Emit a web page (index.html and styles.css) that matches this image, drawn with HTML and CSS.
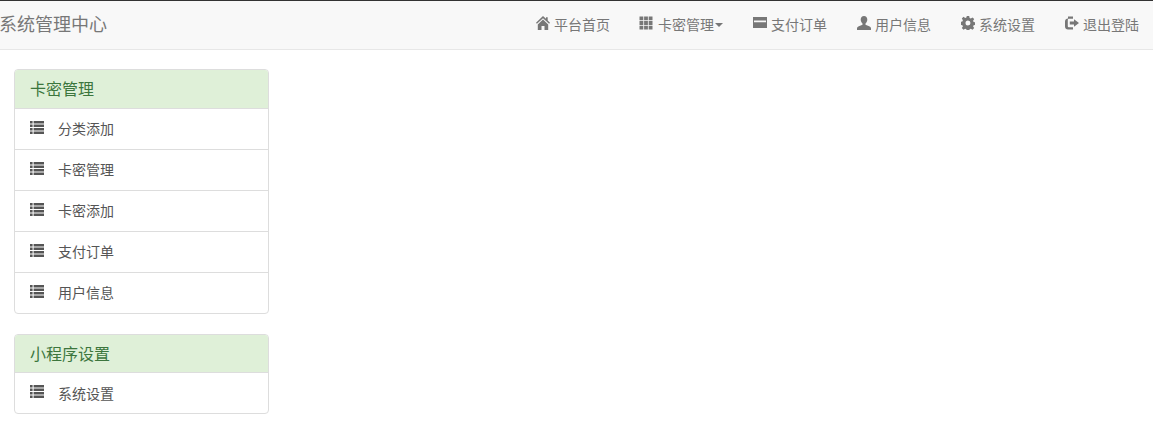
FILE: index.html
```html
<!DOCTYPE html>
<html>
<head>
  <meta charset="utf-8">
  <title>系统管理中心</title>
  <link rel="stylesheet" href="styles.css">
</head>
<body>
  <svg class="defs" width="0" height="0">
    <symbol id="i-list" viewBox="0 0 14 13">
      <path d="M0 0h2.600v2.600H0zM3.600 0H14v2.600H3.600zM0 3.500h2.600v2.600H0zM3.600 3.500H14v2.600H3.600zM0 7h2.600v2.600H0zM3.600 7H14v2.600H3.600zM0 10.400h2.600V13H0zM3.600 10.400H14V13H3.600z"/>
    </symbol>
  </svg>

  <nav class="navbar">
    <a class="brand" href="#">系统管理中心</a>
    <ul class="nav">
      <li><a class="nav-first" href="#"><svg class="icon" viewBox="0 0 14 14"><path d="M7 0 0 6.700l.9 1L7 2.200l6.100 5.500.9-1-2.300-2.100V1.200H10v1.500zM1.800 8.400V14h3.700v-4h3v4h3.700V8.400L7 3.600z"/></svg>平台首页</a></li>
      <li><a href="#"><svg class="icon icon-wide" viewBox="0 0 14 14"><path d="M.5.500h3.800v3.800H.5zM5.100.500h3.800v3.800H5.100zM9.700.500h3.800v3.800H9.700zM.5 5.100h3.800v3.800H.5zM5.100 5.100h3.800v3.800H5.100zM9.700 5.100h3.800v3.800H9.700zM.5 9.700h3.800v3.800H.5zM5.100 9.700h3.800v3.800H5.100zM9.700 9.700h3.800v3.800H9.700z"/></svg>卡密管理<span class="caret"></span></a></li>
      <li><a href="#"><svg class="icon" viewBox="0 0 14 14"><path fill-rule="evenodd" d="M0 1h14v11H0zM1 4.500v1.800h12V4.500z"/></svg>支付订单</a></li>
      <li><a href="#"><svg class="icon" viewBox="0 0 14 14"><path d="M7 0c2.100 0 3.300 1.600 3.300 3.600 0 1.700-.8 3.100-1.800 3.900v1.300l3.700 1.400c1.200.5 1.800 1.200 1.800 2.200V14H0v-1.600c0-1 .6-1.700 1.800-2.200l3.700-1.400V7.500c-1-.8-1.800-2.200-1.800-3.900C3.700 1.600 4.900 0 7 0z"/></svg>用户信息</a></li>
      <li><a href="#"><svg class="icon" viewBox="0 0 14 14"><path fill-rule="evenodd" d="M5.800 0h2.400l.4 2 1.200.5 1.700-1.100 1.700 1.700-1.100 1.700.5 1.200 2 .4v2.400l-2 .4-.5 1.200 1.100 1.700-1.700 1.700-1.700-1.100-1.200.5-.4 2H5.800l-.4-2-1.200-.5-1.700 1.100-1.700-1.700 1.100-1.700-.5-1.200-2-.4V5.800l2-.4.5-1.200-1.100-1.700 1.700-1.700 1.700 1.100 1.200-.5zM7 4.500a2.500 2.500 0 1 0 0 5 2.500 2.500 0 0 0 0-5z"/></svg>系统设置</a></li>
      <li><a href="#"><svg class="icon" viewBox="0 0 14 14"><path d="M3 .5h5v2.300H3.700c-.5 0-.9.400-.9.900v6.600c0 .5.400.9.900.9H8v2.300H3c-1.700 0-3-1.300-3-3v-5c0-1.700 1.300-3 3-3zM9 3.300 14 7l-5 3.700V8.500H4.800v-3H9z"/></svg>退出登陆</a></li>
    </ul>
  </nav>

  <div class="sidebar">
    <div class="panel">
      <div class="panel-heading">卡密管理</div>
      <ul class="list-group">
        <li><svg class="icon-list"><use href="#i-list"/></svg><span class="label">分类添加</span></li>
        <li><svg class="icon-list"><use href="#i-list"/></svg><span class="label">卡密管理</span></li>
        <li><svg class="icon-list"><use href="#i-list"/></svg><span class="label">卡密添加</span></li>
        <li><svg class="icon-list"><use href="#i-list"/></svg><span class="label">支付订单</span></li>
        <li><svg class="icon-list"><use href="#i-list"/></svg><span class="label">用户信息</span></li>
      </ul>
    </div>
    <div class="panel">
      <div class="panel-heading">小程序设置</div>
      <ul class="list-group">
        <li><svg class="icon-list"><use href="#i-list"/></svg><span class="label">系统设置</span></li>
      </ul>
    </div>
  </div>
</body>
</html>
```

FILE: styles.css
```css
body {
  margin: 0;
  font-family: "Liberation Sans", "Noto Sans CJK SC", sans-serif;
  font-size: 14px;
  color: #333;
  background: #fff;
}
a {
  text-decoration: none;
}
ul {
  list-style: none;
  margin: 0;
  padding: 0;
}
.defs {
  position: absolute;
}
.navbar {
  display: flex;
  justify-content: space-between;
  height: 48px;
  border-top: 1px solid #333;
  border-bottom: 1px solid #e7e7e7;
  background: #f8f8f8;
}
.brand {
  margin-left: -1px;
  font-size: 18px;
  line-height: 48px;
  color: #777;
}
.nav {
  display: flex;
  margin-right: -1px;
}
.nav a {
  display: flex;
  align-items: center;
  height: 46px;
  padding: 0 15px 2px;
  color: #777;
}
.nav .nav-first {
  padding-right: 14px;
}
.icon {
  width: 14px;
  height: 14px;
  margin: -2px 4px 0 0;
  fill: #777;
}
.icon-wide {
  margin-right: 5px;
}
.caret {
  width: 0;
  height: 0;
  margin-left: 1px;
  margin-top: 2px;
  border-top: 4px solid #777;
  border-left: 4px solid transparent;
  border-right: 4px solid transparent;
}
.sidebar {
  width: 255px;
  margin: 19px 0 0 14px;
}
.panel {
  margin-bottom: 20px;
  border: 1px solid #ddd;
  border-radius: 4px;
  overflow: hidden;
}
.panel-heading {
  height: 37.5px;
  padding-left: 15px;
  font-size: 16px;
  line-height: 40px;
  color: #3c763d;
  background: #dff0d8;
}
.list-group li {
  display: flex;
  align-items: center;
  height: 40px;
  padding-left: 15px;
  border-top: 1px solid #ddd;
  color: #555;
}
.icon-list {
  width: 14px;
  height: 13px;
  margin: -3px 14px 0 0;
  fill: #555;
}
.label {
  margin-top: -1px;
}
```
